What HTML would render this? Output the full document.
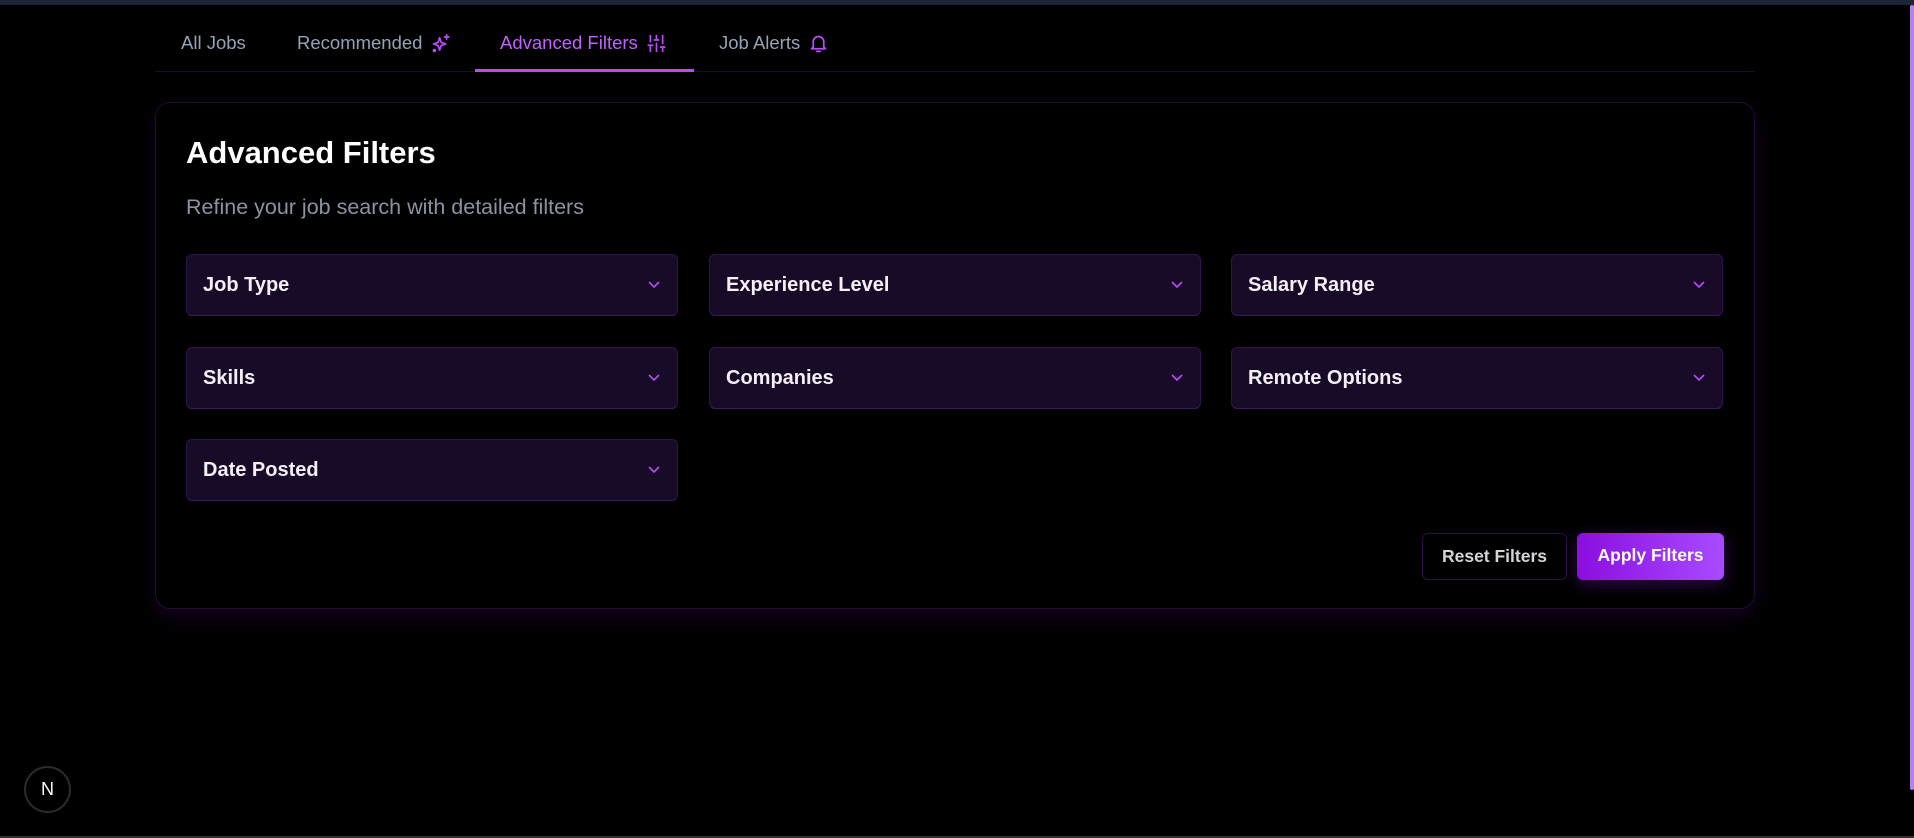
<!DOCTYPE html>
<html><head><meta charset="utf-8">
<style>
*{box-sizing:border-box;margin:0;padding:0}
html,body{width:1914px;height:838px;background:#000;overflow:hidden;font-family:"Liberation Sans",sans-serif}
.topbar{position:absolute;left:0;top:0;width:1914px;height:5px;background:#1c2535}
.bottombar{position:absolute;left:0;bottom:0;width:1914px;height:2px;background:#2a2f3a}
.scroll{position:absolute;right:0;top:5px;width:4px;height:785px;background:#b580f0;border-radius:2px}
.tabs{position:absolute;left:155px;top:0;width:1600px;height:72px;border-bottom:1px solid #1a0c2a}
.tab{position:absolute;top:32px;font-size:18.5px;color:#94a3b8;display:flex;align-items:center;gap:8px;white-space:nowrap}
.tab svg{width:21px;height:21px}
.active{color:#c061ff}
.uline{position:absolute;left:475px;top:69px;width:219px;height:3px;background:#b54cf5}
.card{position:absolute;left:155px;top:102px;width:1600px;height:507px;border:1px solid #1e0f33;border-radius:15px;box-shadow:0 8px 18px rgba(80,0,120,.25)}
h1{position:absolute;left:186px;top:135px;font-size:31px;font-weight:bold;color:#fff}
.sub{position:absolute;left:186px;top:195px;font-size:21.5px;color:#8b93a3}
.dd{position:absolute;width:492px;height:62px;background:#180b28;border:1px solid #2c1448;border-bottom-color:#3a1a5e;border-radius:6px;color:#f4f0f8;font-size:20px;font-weight:bold;padding-left:16px;line-height:60px}
.dd svg{position:absolute;right:16px;top:24px;width:14px;height:12px}
.btn{position:absolute;top:533px;height:47px;border-radius:6px;font-size:17.5px;font-weight:bold;line-height:45px;text-align:center}
.reset{left:1422px;width:145px;border:1px solid #2c1045;color:#d4d4d8}
.apply{left:1577px;width:147px;background:linear-gradient(90deg,#8a0ee0,#a84bff);color:#fff;box-shadow:0 4px 16px rgba(140,30,230,.35)}
.n{position:absolute;left:24px;top:766px;width:47px;height:47px;border-radius:50%;border:2px solid #2b2b2b;color:#fff;font-size:18px;text-align:center;line-height:43px}
</style></head><body>
<div class="topbar"></div>
<div class="scroll"></div>
<div class="tabs"></div>
<div class="tab" style="left:181px">All Jobs</div>
<div class="tab" style="left:297px">Recommended
<svg viewBox="0 0 24 24" fill="none" stroke="#b54cf5" stroke-width="2" stroke-linecap="round" stroke-linejoin="round"><path d="M11 3.5l1.8 5.2L18 10.5l-5.2 1.8L11 17.5l-1.8-5.2L4 10.5l5.2-1.8z" transform="translate(0,2)"/><path d="M19 2v5M16.5 4.5h5"/><circle cx="5" cy="20" r="1" fill="#b54cf5"/></svg></div>
<div class="tab active" style="left:500px">Advanced Filters
<svg viewBox="0 0 24 24" fill="none" stroke="#b54cf5" stroke-width="2" stroke-linecap="round"><path d="M5 3v7M5 14v7M12 3v5M12 12v9M19 3v9M19 16v5M2.5 14h5M9.5 8h5M16.5 16h5"/></svg></div>
<div class="tab" style="left:719px">Job Alerts
<svg viewBox="0 0 24 24" fill="none" stroke="#b54cf5" stroke-width="2" stroke-linecap="round" stroke-linejoin="round"><path d="M6 16V10a6 6 0 0 1 12 0v6l2 2H4z"/><path d="M10 21h4"/></svg></div>
<div class="uline"></div>
<div class="card"></div>
<h1>Advanced Filters</h1>
<div class="sub">Refine your job search with detailed filters</div>

<div class="dd" style="left:186px;top:254px">Job Type<svg viewBox="0 0 14 12"><path d="M2 3l5 5 5-5" fill="none" stroke="#b54cf5" stroke-width="1.6"/></svg></div>
<div class="dd" style="left:709px;top:254px">Experience Level<svg viewBox="0 0 14 12"><path d="M2 3l5 5 5-5" fill="none" stroke="#b54cf5" stroke-width="1.6"/></svg></div>
<div class="dd" style="left:1231px;top:254px">Salary Range<svg viewBox="0 0 14 12"><path d="M2 3l5 5 5-5" fill="none" stroke="#b54cf5" stroke-width="1.6"/></svg></div>
<div class="dd" style="left:186px;top:347px">Skills<svg viewBox="0 0 14 12"><path d="M2 3l5 5 5-5" fill="none" stroke="#b54cf5" stroke-width="1.6"/></svg></div>
<div class="dd" style="left:709px;top:347px">Companies<svg viewBox="0 0 14 12"><path d="M2 3l5 5 5-5" fill="none" stroke="#b54cf5" stroke-width="1.6"/></svg></div>
<div class="dd" style="left:1231px;top:347px">Remote Options<svg viewBox="0 0 14 12"><path d="M2 3l5 5 5-5" fill="none" stroke="#b54cf5" stroke-width="1.6"/></svg></div>
<div class="dd" style="left:186px;top:439px">Date Posted<svg viewBox="0 0 14 12"><path d="M2 3l5 5 5-5" fill="none" stroke="#b54cf5" stroke-width="1.6"/></svg></div>

<div class="btn reset">Reset Filters</div>
<div class="btn apply">Apply Filters</div>
<div class="n">N</div>
<div class="bottombar"></div>
</body></html>
